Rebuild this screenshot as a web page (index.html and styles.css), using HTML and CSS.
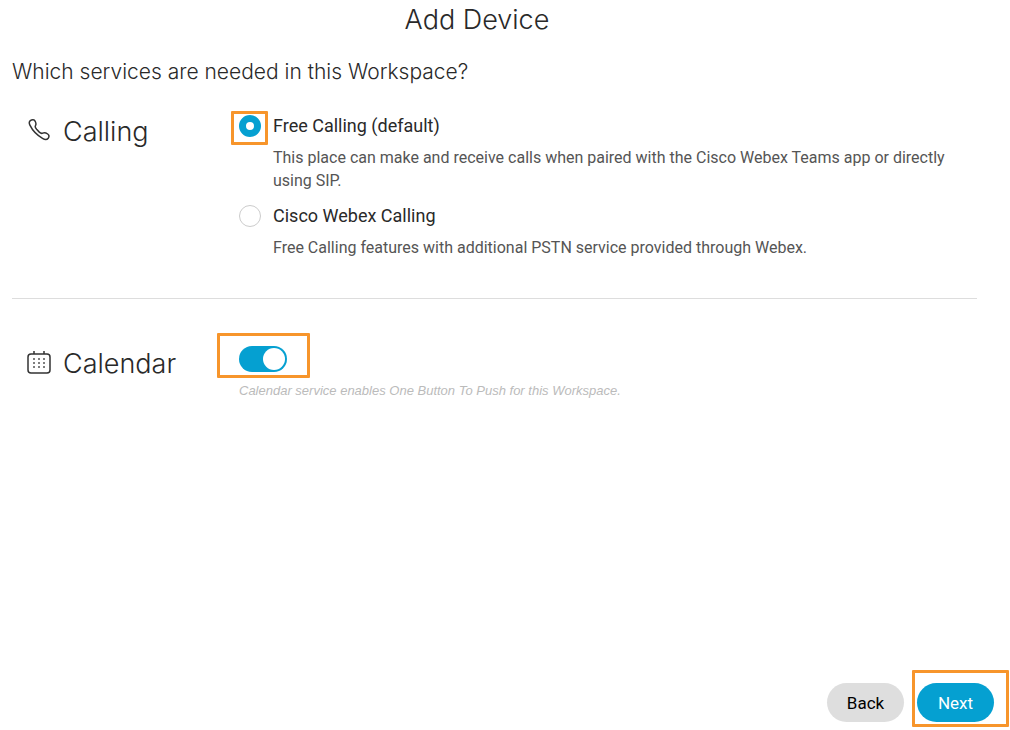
FILE: index.html
```html
<!doctype html>

<html lang="en">
<head>
	<title>Add Device</title>
	<meta charset="utf-8">
	<link rel="stylesheet" href="styles.css">
</head>

<body>
	<form class="dialog">
		<button type="button" class="close" aria-label="Close">
			<svg width="16" height="16" viewBox="0 0 16 16"><path d="M1 1l14 14M15 1L1 15"/></svg>
		</button>
		<h1>Add Device</h1>
		<h2>Which services are needed in this Workspace?</h2>

		<section class="service calling">
			<h3>
				<svg class="icon" width="24" height="24" viewBox="0 0 24 24"><path d="M3.3 2.6C5.2 1.300 7.300 1.500 8.200 3.300C9 5 9.300 6.500 8.500 7.600C7.700 8.700 8.200 9.600 9.600 11.200L12.300 14.100C13.800 15.500 14.700 15.700 15.700 15.100C17.200 14.300 19 14.800 20.700 16C22.200 17.100 22.200 18.800 21.200 20.200C20 21.700 17.700 21.700 15.500 20.400C10.500 17.500 5.200 11.900 2.900 7.200C2 5.300 2 3.700 3.300 2.600Z"/></svg>
				Calling
			</h3>
			<div class="options">
				<div class="option">
					<span class="mark mark-radio"><input type="radio" name="calling" id="free" aria-describedby="freeText" checked></span>
					<label for="free">Free Calling (default)</label>
					<p id="freeText">This place can make and receive calls when paired with the Cisco Webex Teams app or directly using SIP.</p>
				</div>
				<div class="option">
					<input type="radio" name="calling" id="webex" aria-describedby="webexText">
					<label for="webex">Cisco Webex Calling</label>
					<p id="webexText">Free Calling features with additional PSTN service provided through Webex.</p>
				</div>
			</div>
		</section>

		<section class="service calendar">
			<h3>
				<svg class="icon" width="24" height="24" viewBox="0 0 24 24">
					<rect x="1" y="4" width="22" height="19" rx="3"/>
					<path d="M7 1v3M17 1v3"/>
					<path class="dots" d="M6 9h12M6 13h12M6 17h12"/>
				</svg>
				<label for="calendar">Calendar</label>
			</h3>
			<div>
				<span class="mark mark-switch"><input type="checkbox" class="switch" id="calendar" aria-describedby="calendarText" checked></span>
				<p class="hint" id="calendarText">Calendar service enables One Button To Push for this Workspace.</p>
			</div>
		</section>

		<footer>
			<button type="button">Back</button>
			<span class="mark mark-next"><button type="submit" class="primary">Next</button></span>
		</footer>
	</form>
</body>
</html>
```

FILE: styles.css
```css
* { box-sizing: border-box }
body {
	margin: 0px;
	background-color: white;
	font-family: Roboto, "Liberation Sans", sans-serif;
	color: #292929;
}
h1, h2, h3, p { margin: 0px }
h1, h2, h3 {
	font-family: Inter, "Liberation Sans", sans-serif;
	font-weight: 300;
}
.dialog {
	display: flex;
	flex-direction: column;
	min-height: 100vh;
	padding: 0px 16px 8px 12px;
}
h1 {
	padding: 4px 52px 0px 0px;
	font-size: 27px;
	line-height: 32px;
	text-align: center;
}
h2 {
	margin-top: 20px;
	font-size: 21px;
	line-height: 32px;
}
/* the cross sits half out of the top edge */
.close {
	position: absolute;
	top: -15px;
	right: 17px;
	height: 16px;
	padding: 0px;
	background: none;
	border: none;
}
.close svg {
	display: block;
	stroke: #777;
}

.service {
	display: grid;
	grid-template-columns: 227px 1fr;
	margin-right: 17px;
}
.calling {
	padding: 26px 0px 27px;
	border-bottom: 1px solid #ddd;
}
.calendar { padding-top: 47px }
h3 {
	display: flex;
	gap: 12px;
	padding-left: 15px;
	font-size: 27px;
	line-height: 36px;
}
.icon {
	margin-top: 4px;
	fill: none;
	stroke: #333;
	stroke-width: 1.5;
}
.dots {
	stroke: #555;
	stroke-dasharray: 2 3;
}

.option {
	display: grid;
	grid-template-columns: 22px 1fr;
	column-gap: 12px;
	padding-bottom: 12px;
}
.option label {
	font-size: 18px;
	line-height: 24px;
}
.option p {
	grid-column: 2;
	padding-top: 8px;
	font-size: 16px;
	line-height: 23px;
	color: #555;
}
input {
	display: block;
	appearance: none;
	margin: 0px;
}
input[type=radio] {
	width: 22px;
	height: 22px;
	margin-top: 1px;
	background-color: white;
	border: 1px solid #ccc;
	border-radius: 50%;
}
input[type=radio]:checked { border: 7px solid #05a0d1 }

.switch {
	display: flex;
	justify-content: flex-end;
	width: 48px;
	height: 26px;
	padding: 2px;
	background-color: #05a0d1;
	border-radius: 13px;
}
.switch::before {
	content: "";
	width: 22px;
	height: 22px;
	background-color: white;
	border-radius: 50%;
}
.switch:not(:checked) {
	justify-content: flex-start;
	background-color: #ccc;
}
.hint {
	padding-top: 10px;
	font-family: "Liberation Sans", sans-serif;
	font-size: 13px;
	font-style: italic;
	line-height: 18px;
	color: #bbb;
}

footer {
	display: flex;
	justify-content: flex-end;
	gap: 13px;
	margin-top: auto;
}
footer button {
	display: block;
	min-width: 77px;
	height: 39px;
	padding: 0px 18px;
	background-color: #dedede;
	border: none;
	border-radius: 20px;
	font-family: inherit;
	font-size: 17px;
	color: black;
}
footer .primary {
	background-color: #05a0d1;
	color: white;
}

/* orange frames round the controls to use */
.mark {
	display: block;
	position: relative;
	width: max-content;
}
.mark::after {
	content: "";
	position: absolute;
	border: 3px solid #f7952b;
	border-radius: 1px;
	pointer-events: none;
}
.mark-radio::after { inset: -3px -7px -7px -8px }
.mark-switch::after { inset: -13px -23px -6px -22px }
.mark-next::after { inset: -13px -15px -5px -5px }
```
